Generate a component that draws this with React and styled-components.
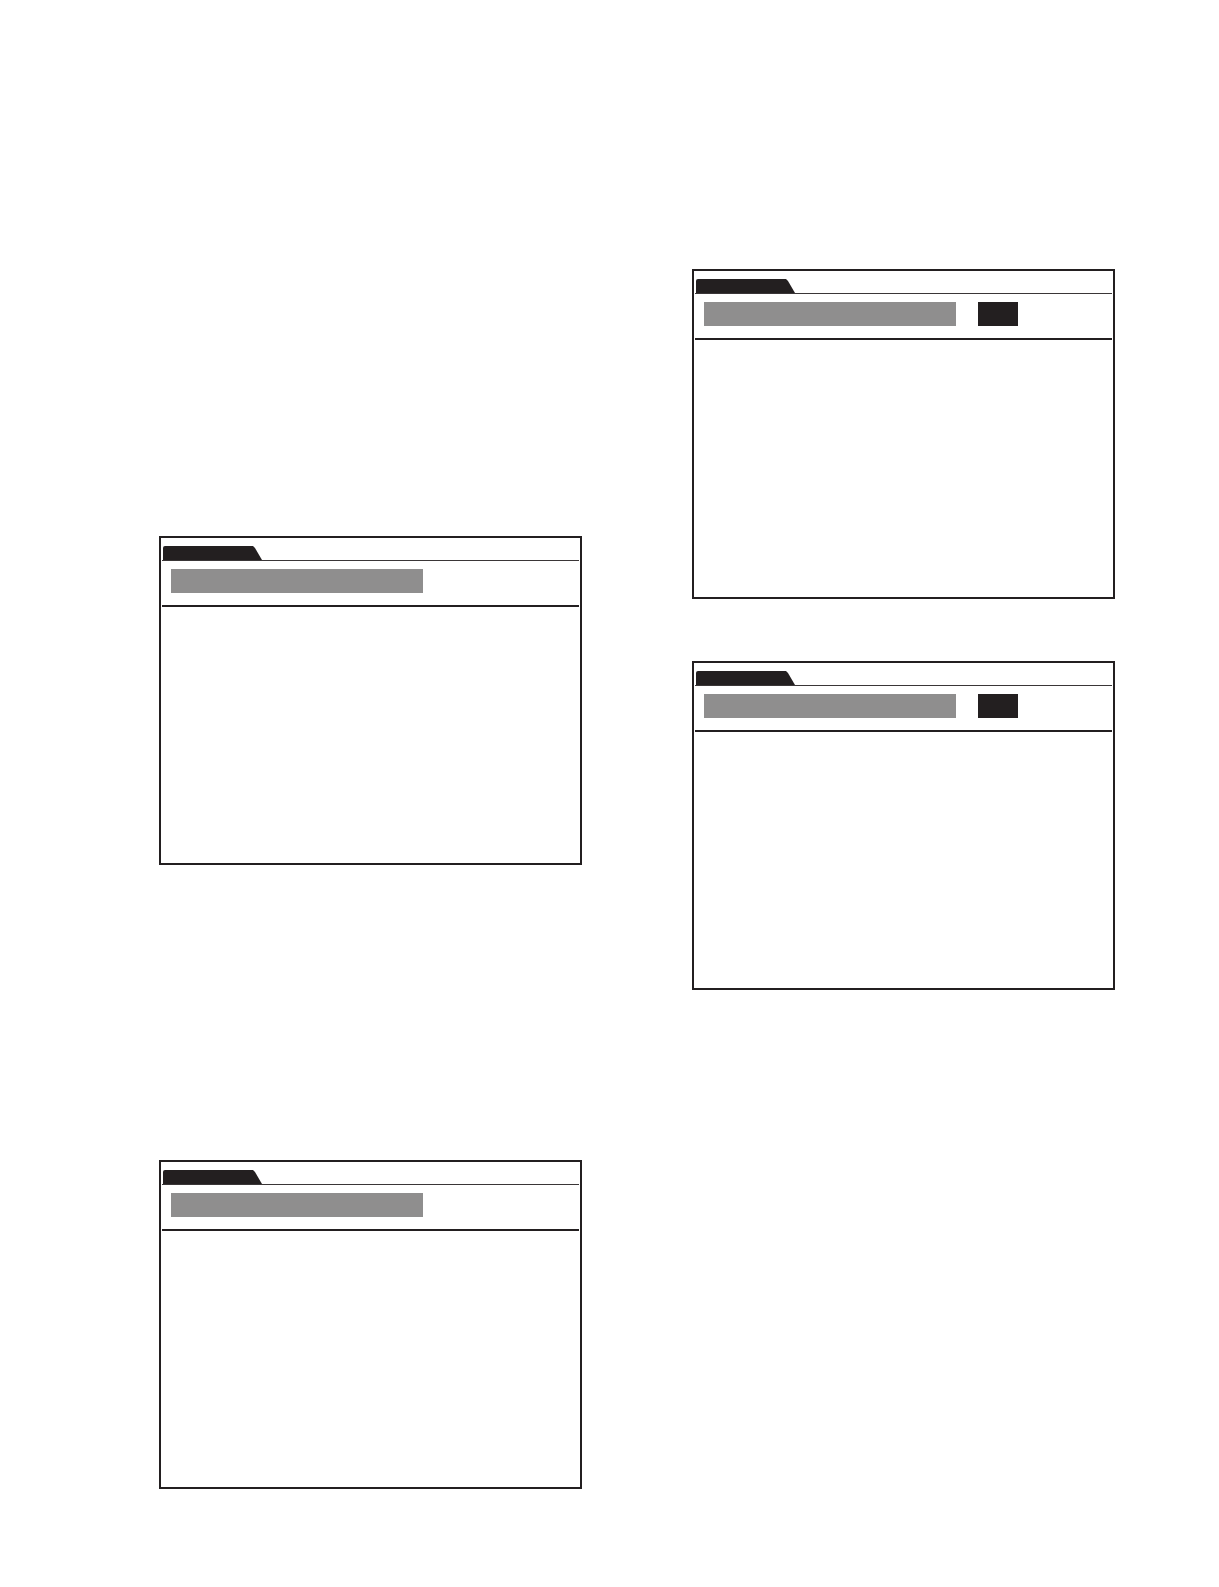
import React from "react";
import styled, { createGlobalStyle } from "styled-components";

const Global = createGlobalStyle`
  html, body {
    margin: 0;
    padding: 0;
    background: #ffffff;
    font-family: "Liberation Sans", Arial, sans-serif;
  }
`;

const Page = styled.div`
  width: 1219px;
  height: 1587px;
  box-sizing: border-box;
  padding-left: 159px;
  display: grid;
  grid-template-columns: 423px 423px;
  column-gap: 110px;
  align-items: start;
  overflow: hidden;
`;

const Column = styled.div`
  display: flex;
  flex-direction: column;
  padding-top: ${(p) => p.$top}px;
  gap: ${(p) => p.$gap}px;
`;

const Panel = styled.section`
  box-sizing: border-box;
  height: ${(p) => p.$height || 329}px;
  border: 2px solid #231f20;
  padding: 8px 1px 0;
  background: #ffffff;
  display: flex;
  flex-direction: column;
`;

const TabStrip = styled.div`
  display: flex;
  align-items: flex-end;
  padding-left: 1px;
  border-bottom: 1px solid #3a3637;
`;

const Tab = styled.div`
  width: 99px;
  height: 14px;
  background: #231f20;
  border-top-left-radius: 2px;
  clip-path: polygon(0 0, 90px 0, 92px 2px, 99px 100%, 0 100%);
`;

const FieldRow = styled.div`
  display: flex;
  align-items: center;
  gap: 22px;
  padding: 8px 0 0 9px;
  margin-bottom: 12px;
`;

const Field = styled.div`
  width: 252px;
  height: 24px;
  background: #8f8e8e;
`;

const Swatch = styled.div`
  width: 40px;
  height: 24px;
  background: #231f20;
`;

const Divider = styled.div`
  height: 2px;
  background: #231f20;
`;

const Body = styled.div`
  flex: 1;
`;

function Window({ withSwatch, height }) {
  return (
    <Panel $height={height}>
      <TabStrip>
        <Tab />
      </TabStrip>
      <FieldRow>
        <Field />
        {withSwatch && <Swatch />}
      </FieldRow>
      <Divider />
      <Body />
    </Panel>
  );
}

export default function App() {
  return (
    <>
      <Global />
      <Page>
        <Column $top={536} $gap={295}>
          <Window />
          <Window />
        </Column>
        <Column $top={269} $gap={62}>
          <Window withSwatch height={330} />
          <Window withSwatch />
        </Column>
      </Page>
    </>
  );
}
